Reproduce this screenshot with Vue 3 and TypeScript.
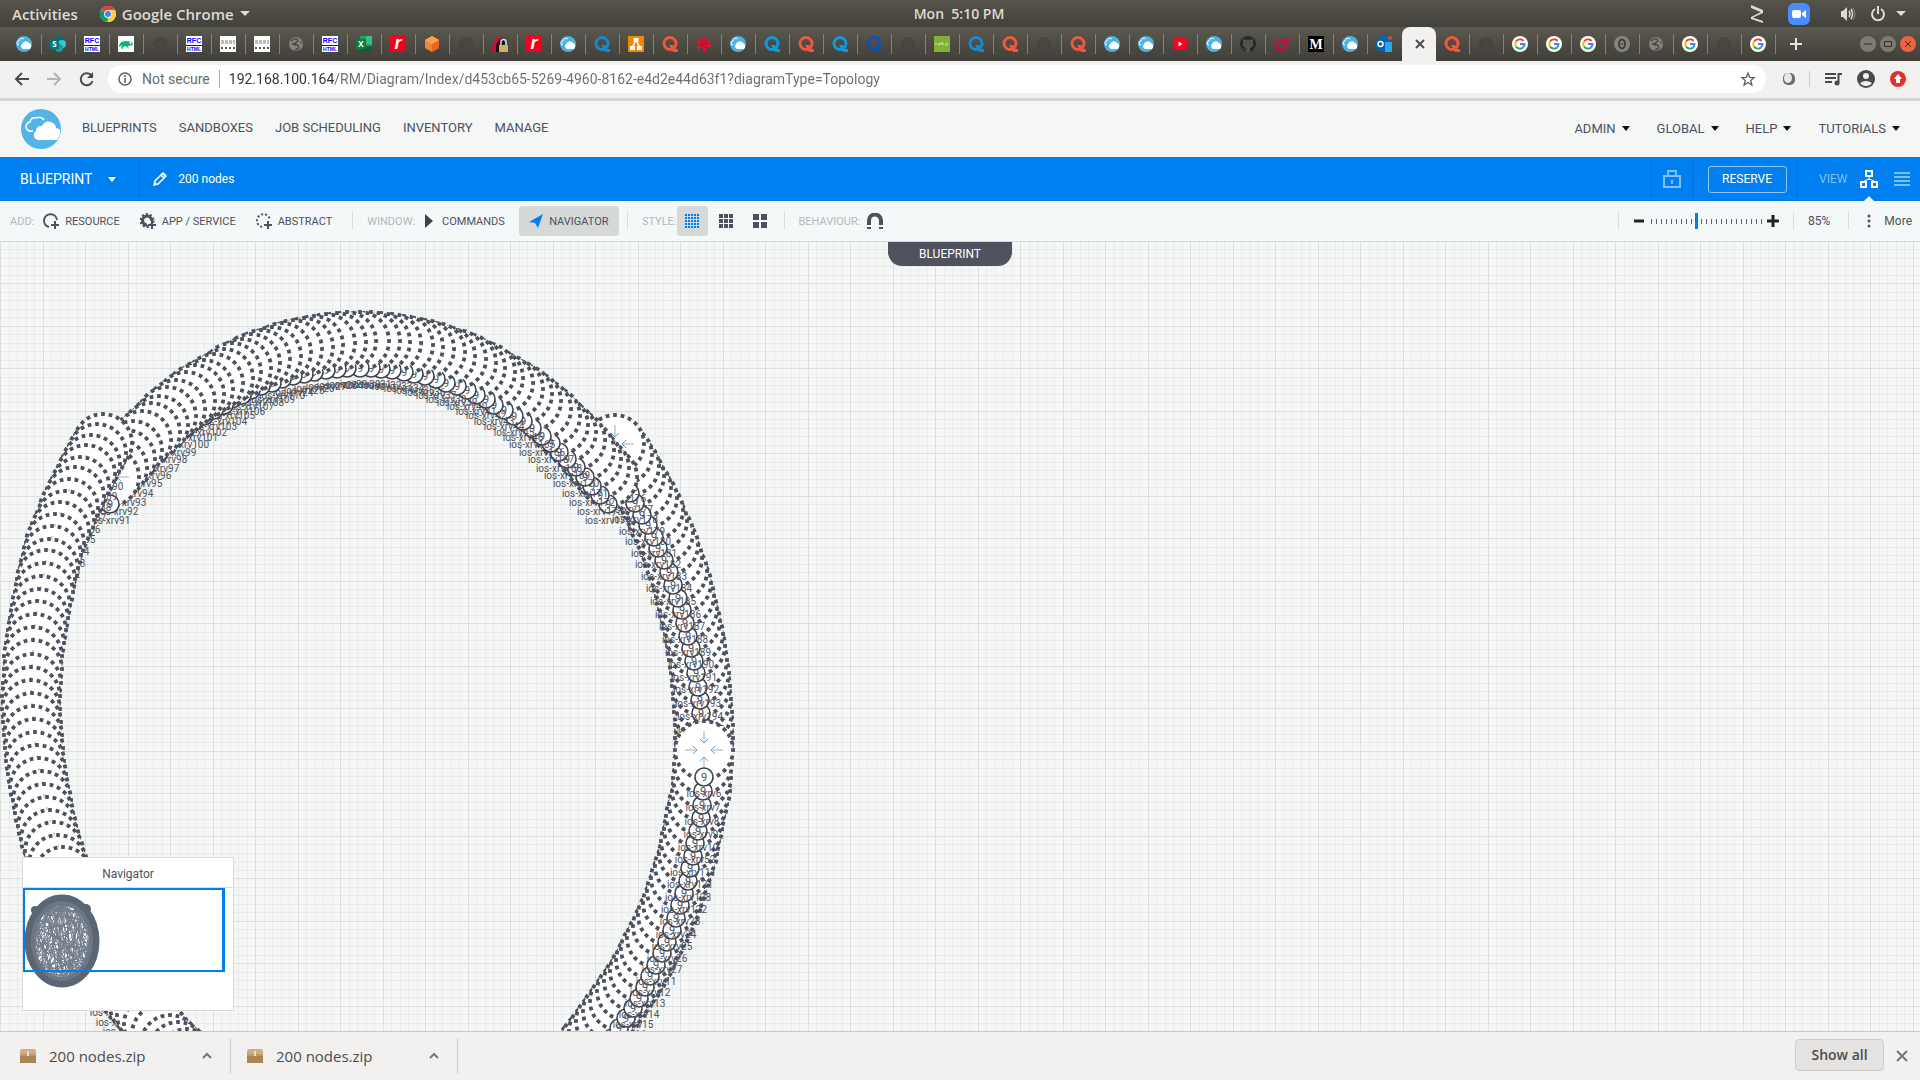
<script setup lang="ts">
import { ref } from 'vue'

interface Tab {
  icon: string
  color?: string
}

interface DiagramNode {
  x: number
  y: number
  label: string
}

const tabs: Tab[] = [
  { icon: 'cloud' }, { icon: 'sharepoint' }, { icon: 'rfc' }, { icon: 'suse' }, { icon: 'globe', color: '#45443f' },
  { icon: 'rfc' }, { icon: 'sketch' }, { icon: 'sketch' }, { icon: 'globe', color: '#85847f' }, { icon: 'rfc' },
  { icon: 'excel' }, { icon: 'r' }, { icon: 'cube' }, { icon: 'globe', color: '#45443f' }, { icon: 'lock' },
  { icon: 'r' }, { icon: 'cloud' }, { icon: 'q', color: '#1b87c9' }, { icon: 'diagram' }, { icon: 'q', color: '#f0583e' },
  { icon: 'flower' }, { icon: 'cloud' }, { icon: 'q', color: '#0f9ad8' }, { icon: 'q', color: '#f0583e' }, { icon: 'q', color: '#0f9ad8' },
  { icon: 'q', color: '#1450a8' }, { icon: 'globe', color: '#45443f' }, { icon: 'juniper' }, { icon: 'q', color: '#1b87c9' }, { icon: 'q', color: '#f0583e' },
  { icon: 'globe', color: '#45443f' }, { icon: 'q', color: '#f0583e' }, { icon: 'cloud' }, { icon: 'cloud' }, { icon: 'youtube' },
  { icon: 'cloud' }, { icon: 'github' }, { icon: 'swirl' }, { icon: 'medium' }, { icon: 'cloud' },
  { icon: 'outlook' }, { icon: 'active' }, { icon: 'q', color: '#f0583e' }, { icon: 'globe', color: '#45443f' }, { icon: 'google' },
  { icon: 'google' }, { icon: 'google' }, { icon: 'ring' }, { icon: 'globe', color: '#85847f' }, { icon: 'google' },
  { icon: 'globe', color: '#45443f' }, { icon: 'google' },
]

const url = ref('192.168.100.164/RM/Diagram/Index/d453cb65-5269-4960-8162-e4d2e44d63f1?diagramType=Topology')
const zoom = ref(85)
const menus = ['BLUEPRINTS', 'SANDBOXES', 'JOB SCHEDULING', 'INVENTORY', 'MANAGE']
const accountMenus = ['ADMIN', 'GLOBAL', 'HELP', 'TUTORIALS']
const downloads = ['200 nodes.zip', '200 nodes.zip']

// Node centres in page space, walked clockwise; the canvas itself starts at CANVAS_TOP.
const CANVAS_TOP = 242

const lowerRight = [
  [704, 750], [703, 764], [702, 778], [701, 791], [698, 804], [695, 816], [693, 829], [690, 841], [688, 854], [684, 866],
  [680, 878], [676, 891], [672, 903], [667, 915], [662, 926], [656, 938], [650, 949], [645, 960], [639, 971], [633, 981],
  [626, 991], [619, 1001], [612, 1011], [605, 1021], [598, 1031], [591, 1040], [584, 1049],
]
const lowerRightIds = [6, 7, 8, 9, 10, 52, 111, 121, 128, 122, 28, 24, 25, 26, 27, 11, 12, 13, 14, 15, 16, 17, 18, 19, 20, 21, 22]

const left = [
  [187, 1058], [178, 1051], [170, 1044], [161, 1034], [153, 1024], [146, 1015], [139, 1006], [131, 997], [123, 988],
  [116, 979], [110, 969], [104, 959], [98, 949], [92, 938], [86, 926], [80, 914], [74, 902], [68, 889], [63, 876],
  [58, 864], [54, 851], [50, 839], [47, 826], [44, 813], [42, 800], [39, 787], [37, 774], [35, 761], [34, 748],
  [33, 735], [32, 722], [31, 709], [31, 696], [32, 683], [33, 669], [33, 656], [35, 643], [37, 630], [39, 618],
  [41, 605], [44, 592], [46, 579], [49, 568], [52, 555], [55, 543], [60, 531], [65, 520], [69, 508], [75, 496],
  [80, 486], [86, 474], [91, 464], [97, 453], [103, 443],
]

const topRight = [
  [360, 341], [371, 341], [381, 342], [392, 343], [404, 345], [414, 347], [425, 349], [436, 352], [446, 356], [457, 359],
  [467, 363], [476, 368], [486, 372], [494, 378], [504, 383], [514, 389], [523, 394], [532, 401], [542, 409], [551, 416],
  [559, 425], [567, 432], [576, 440], [585, 450], [592, 459], [600, 468], [608, 477],
]
const topLeft = topRight.slice(1).reverse().map(([x, y]) => [718 - x, y])
const top = [...topLeft, ...topRight]

const right = [
  [615, 444], [623, 455], [630, 466], [635, 476], [642, 488], [648, 498], [654, 510], [658, 521], [664, 533], [669, 545],
  [673, 558], [678, 571], [682, 583], [685, 596], [688, 609], [691, 621], [694, 634], [696, 646], [698, 660], [700, 673],
  [701, 686], [702, 699], [703, 712], [704, 725], [704, 738],
]

function topLabel(index: number): number {
  const fromEnd = top.length - 1 - index
  if (fromEnd <= 9) return 174 - fromEnd
  if (index < 20) return 91 + index
  return 56 - fromEnd
}

function node(point: number[], id: number): DiagramNode {
  return { x: point[0], y: point[1] - CANVAS_TOP, label: `ios-xrv${id}` }
}

const clockwise: DiagramNode[] = [
  ...lowerRight.map((p, i) => node(p, lowerRightIds[i])),
  ...left.map((p, i) => node(p, 37 + i)),
  ...top.map((p, i) => node(p, topLabel(i))),
  ...right.map((p, i) => node(p, 175 + i)),
]
const nodes = clockwise.reverse()

function gridPath(offset: number, step: number): string {
  let path = ''
  for (let x = 0; x < 3840; x += step) path += `M${Math.round(x)} 0v2160`
  for (let y = offset; y < 2160; y += step) path += `M0 ${Math.round(y)}h3840`
  return path
}
const minorGrid = gridPath(7, 8.5)
const majorGrid = gridPath(41, 42.5)

// Overview links: chords between pseudo-random points of the node ring.
function overviewPath(): string {
  let seed = 7
  const next = () => (seed = (seed * 16807) % 2147483647) / 2147483647
  const point = (angle: number) => `${(39 + 33 * Math.cos(angle)).toFixed(1)} ${(53 + 42 * Math.sin(angle)).toFixed(1)}`
  let path = ''
  for (let i = 0; i < 130; i++) {
    const a = next() * Math.PI * 2
    const b = a + 0.9 + next() * 4.4
    path += `M${point(a)}L${point(b)}`
  }
  return path
}
const links = overviewPath()
</script>

<template>
  <div class="desktop">
    <header class="system">
      <div class="system-left">
        <span>Activities</span>
        <span class="app-name">
          <svg width="16" height="16" viewBox="0 0 16 16">
            <circle cx="8" cy="8" r="8" fill="#e8eaed" />
            <path d="M8 8 1 4A8 8 0 0 1 15 4z" fill="#db4437" />
            <path d="M8 8 1 4a8 8 0 0 0 6.500 12L11 9z" fill="#0f9d58" />
            <path d="M8 8V4h7a8 8 0 0 1-7.500 12z" fill="#ffcd40" />
            <circle cx="8" cy="8" r="4" fill="#f1f1f1" /><circle cx="8" cy="8" r="3" fill="#4285f4" />
          </svg>
          Google Chrome
          <i class="caret light"></i>
        </span>
      </div>
      <span class="clock">Mon&nbsp; 5:10 PM</span>
      <div class="system-right">
        <svg width="14" height="20" viewBox="0 0 14 20" fill="#dfdbd2"><path d="M1 1 13 6v3L1 4zM13 7v2L2 14l-1-1zM1 13l12 4v2L1 15z" /></svg>
        <svg width="22" height="22" viewBox="0 0 22 22"><rect width="22" height="22" rx="6" fill="#4a8cff" /><rect x="4" y="7" width="9" height="8" rx="2" fill="#fff" /><path d="m14 10 4-3v8l-4-3z" fill="#fff" /></svg>
        <svg class="volume" width="16" height="16" viewBox="0 0 16 16" fill="none" stroke="#dfdbd2"><path d="M1 5h2l4-4v14l-4-4H1z" fill="#dfdbd2" stroke="none" /><path d="M9 5q2 3 0 6M11 3q3 5 0 10" stroke-width="1.500" /><path d="M13 2q4 6 0 12" stroke="#8b8982" /></svg>
        <svg width="16" height="16" viewBox="0 0 16 16" fill="none" stroke="#dfdbd2" stroke-width="2"><path d="M5 3a6 6 0 1 0 6 0M8 0v8" /></svg>
        <i class="caret light"></i>
      </div>
    </header>

    <nav class="tabs">
      <div v-for="(tab, i) in tabs" :key="i" class="tab" :class="{ active: tab.icon === 'active', before: tabs[i + 1]?.icon === 'active' }">
        <svg width="16" height="16" viewBox="0 0 16 16">
          <template v-if="tab.icon === 'cloud'">
            <circle cx="8" cy="8" r="8" fill="#4fb2e3" />
            <path d="M3 9a2 2 0 0 1 0-4 3 3 0 0 1 5-2" fill="none" stroke="#fff" />
            <path d="M7 13a3 3 0 0 1-1-5 4 4 0 0 1 7-1 3 3 0 0 1 2 3 3 3 0 0 1-1 3z" fill="#fff" />
          </template>
          <template v-else-if="tab.icon === 'q'">
            <circle cx="8" cy="7.500" r="6" fill="none" :stroke="tab.color" stroke-width="3" />
            <path d="M7 9l4 0 2 4h3v3h-5z" :fill="tab.color" />
          </template>
          <template v-else-if="tab.icon === 'globe'">
            <circle cx="8" cy="8" r="7" :fill="tab.color" />
            <path d="M3 5q4-4 7-1L8 7 5 8l2 1 3 0 1 3-4 2M12 6l2 1" fill="none" stroke="#4b4a44" stroke-width="1.500" />
          </template>
          <template v-else-if="tab.icon === 'google'">
            <circle cx="8" cy="8" r="8" fill="#fff" />
            <g fill="none" stroke-width="2"><path d="M4 5.500A4.700 4.700 0 0 1 11.500 5" stroke="#ea4335" /><path d="M4 5.500a4.700 4.700 0 0 0 0 5" stroke="#fbbc05" /><path d="M4 10.500a4.700 4.700 0 0 0 7 1" stroke="#34a853" /><path d="M11 11.500a4.700 4.700 0 0 0 1.500-3.500H8" stroke="#4285f4" /></g>
          </template>
          <template v-else-if="tab.icon === 'rfc'">
            <rect width="16" height="16" fill="#fff" /><rect y="9" width="16" height="1" fill="#10f" />
            <text x="8" y="7" class="rfc">RFC</text><text x="8" y="15" class="rfc small">HTML</text>
          </template>
          <template v-else-if="tab.icon === 'sharepoint'">
            <circle cx="9" cy="5" r="5" fill="#036c70" /><circle cx="12" cy="8" r="4" fill="#37c6d0" /><circle cx="9" cy="12" r="4" fill="#1a9ba1" />
            <rect y="4" width="9" height="9" rx="1" fill="#03787c" /><text x="4.500" y="11" class="glyph">S</text>
          </template>
          <template v-else-if="tab.icon === 'suse'">
            <rect width="16" height="16" fill="#fff" /><path d="M1 11q0-6 7-6l6 1 1 3-5 1 1 3-3-3-3 1v2q-3 0-1-4-1 0-2 2z" fill="#0ab27a" /><circle cx="12.500" cy="7" r="1" fill="#fff" />
          </template>
          <template v-else-if="tab.icon === 'sketch'">
            <rect width="16" height="16" fill="#fff" /><path d="M1 5h14M1 7h14" stroke="#aaa69d" stroke-width="1.500" stroke-dasharray="3 1" /><path d="M1 12h14" stroke="#555" stroke-width="2" stroke-dasharray="2 2" />
          </template>
          <template v-else-if="tab.icon === 'excel'">
            <rect x="4" width="12" height="16" fill="#21a366" /><rect x="10" width="6" height="8" fill="#33c481" /><rect x="4" y="10" width="12" height="6" fill="#185c37" />
            <rect y="3" width="10" height="10" rx="1" fill="#107c41" /><text x="5" y="11" class="glyph">X</text>
          </template>
          <template v-else-if="tab.icon === 'r'">
            <rect width="16" height="16" fill="#f5001c" /><text x="8" y="13" class="letter-r">r</text>
          </template>
          <template v-else-if="tab.icon === 'cube'">
            <path d="M8 0l7 4v8l-7 4-7-4V4z" fill="#f58536" /><path d="M8 8l7-4v8l-7 4z" fill="#e8651f" /><path d="M8 0l7 4-7 4-7-4z" fill="#ffa04f" />
          </template>
          <template v-else-if="tab.icon === 'lock'">
            <path d="M0 14Q1 1 10 0l-3 16H0z" fill="#c8102e" /><path d="M4 16Q3 4 11 2l2 5-3 9z" fill="#111" /><path d="M9 9V6a2 2 0 0 1 5 0v3" fill="none" stroke="#ddd" stroke-width="1.500" /><rect x="7" y="9" width="9" height="7" fill="#cfae6a" />
          </template>
          <template v-else-if="tab.icon === 'diagram'">
            <rect width="16" height="16" rx="1" fill="#f08705" /><path d="M8 4 4 12M8 4l4 8" stroke="#fff" stroke-width="1.500" /><rect x="5.500" y="2" width="5" height="4" fill="#fff" /><rect x="2" y="10" width="5" height="4" fill="#fff" /><rect x="9" y="10" width="5" height="4" fill="#fff" />
          </template>
          <template v-else-if="tab.icon === 'flower'">
            <path d="M8 8 7 0l3 1zM8 8l6-5 1 3zM8 8l8 1-2 3zM8 8l3 7-4 1zM8 8l-5 6-2-3zM8 8 0 7l2-3zM8 8 3 2l3-1z" fill="#e8112f" /><circle cx="8" cy="8" r="4" fill="#d00d2b" />
          </template>
          <template v-else-if="tab.icon === 'juniper'">
            <rect width="16" height="16" fill="#84b135" /><path d="M2 9V7M4 9h1V7M7 9V7h2v2M11 9h2V7" fill="none" stroke="#dbe9bd" />
          </template>
          <template v-else-if="tab.icon === 'youtube'">
            <rect x="1" y="2" width="14" height="12" rx="3" fill="#ff0020" /><path d="m6.500 5.500 4 2.500-4 2.500z" fill="#fff" />
          </template>
          <template v-else-if="tab.icon === 'github'">
            <circle cx="8" cy="8" r="8" fill="#24292e" /><path d="M6 16v-4q-4-1-3-5V3l3 1h4l3-1v4q1 4-3 5v4z" fill="#55534c" /><path d="M6 14q-2 0-3-2" fill="none" stroke="#55534c" />
          </template>
          <template v-else-if="tab.icon === 'swirl'">
            <circle cx="7" cy="9" r="5" fill="none" stroke="#ce0b3c" stroke-width="2.500" /><circle cx="14" cy="4" r="2" fill="#ce0b3c" />
          </template>
          <template v-else-if="tab.icon === 'medium'">
            <rect width="16" height="16" fill="#000" /><text x="8" y="13" class="medium">M</text>
          </template>
          <template v-else-if="tab.icon === 'outlook'">
            <rect x="3" width="11" height="15" rx="1" fill="#0a63b8" /><rect x="9" y="6" width="7" height="10" fill="#28a8ea" /><rect y="3" width="9" height="10" rx="1" fill="#0a5cad" /><circle cx="4.500" cy="8" r="2.500" fill="none" stroke="#fff" stroke-width="1.500" /><circle cx="14" cy="2" r="2" fill="#e8413a" />
          </template>
          <template v-else-if="tab.icon === 'ring'">
            <circle cx="8" cy="8" r="8" fill="#85847f" /><ellipse cx="8" cy="8" rx="3" ry="4.500" fill="none" stroke="#403f3a" stroke-width="2" /><circle cx="8" cy="8" r="1" fill="#403f3a" />
          </template>
          <path v-else d="m4 4 8 8m0-8-8 8" stroke="#4c4c4c" stroke-width="2" />
        </svg>
      </div>
      <button class="new-tab" aria-label="New tab"><svg width="14" height="14" viewBox="0 0 14 14"><path d="M7 1v12M1 7h12" stroke="#e8e6e1" stroke-width="2" /></svg></button>
      <div class="window-buttons">
        <button aria-label="Minimize"><svg width="16" height="16" viewBox="0 0 16 16"><path d="M4 8h8" stroke="#2f2e2a" /></svg></button>
        <button aria-label="Maximize"><svg width="16" height="16" viewBox="0 0 16 16"><path d="M4.500 5.500h7v5h-7z" fill="none" stroke="#2f2e2a" /></svg></button>
        <button class="close" aria-label="Close"><svg width="16" height="16" viewBox="0 0 16 16"><path d="m5 5 6 6m0-6-6 6" stroke="#4a2015" /></svg></button>
      </div>
    </nav>

    <div class="browser-bar">
      <button aria-label="Back"><svg width="16" height="16" viewBox="0 0 16 16" fill="none" stroke="#4a4a4a" stroke-width="2"><path d="M15 8H2M8 2 2 8l6 6" /></svg></button>
      <button aria-label="Forward"><svg width="16" height="16" viewBox="0 0 16 16" fill="none" stroke="#b5b4b3" stroke-width="2"><path d="M1 8h13M8 2l6 6-6 6" /></svg></button>
      <button aria-label="Reload"><svg width="16" height="16" viewBox="0 0 16 16"><path d="M13 4a6 6 0 1 0 1.500 6" fill="none" stroke="#4a4a4a" stroke-width="2" /><path d="M15 1v6H9z" fill="#4a4a4a" /></svg></button>
      <div class="address">
        <svg width="14" height="14" viewBox="0 0 14 14" fill="none" stroke="#5f5f5f"><circle cx="7" cy="7" r="6" stroke-width="1.500" /><path d="M7 6v5M7 3v2" stroke-width="1.500" /></svg>
        <label for="url">Not secure</label>
        <input id="url" v-model="url" type="text" spellcheck="false" />
        <svg width="16" height="16" viewBox="0 0 16 16"><path d="m8 2 1.700 4.300 4.500.3-3.500 2.900 1.200 4.500L8 11.500 4.100 14l1.200-4.500L1.800 6.600l4.500-.3z" fill="none" stroke="#5f5f5f" stroke-width="1.300" /></svg>
      </div>
      <div class="extensions">
        <svg width="14" height="14" viewBox="0 0 14 14"><rect x="1" y="1" width="12" height="12" rx="5" fill="#6d6d6d" /><ellipse cx="6" cy="6" rx="4" ry="5" fill="#e8e8e8" /></svg>
        <i class="bar-divider"></i>
        <svg width="17" height="14" viewBox="0 0 17 14"><path d="M0 2h11M0 6h11M0 10h7" stroke="#4a4a4a" stroke-width="2" /><path d="M13.500 11V2H17" fill="none" stroke="#4a4a4a" stroke-width="2" /><circle cx="12" cy="11" r="2.500" fill="#4a4a4a" /></svg>
        <svg width="18" height="18" viewBox="0 0 18 18"><circle cx="9" cy="9" r="9" fill="#4a4a4a" /><circle cx="9" cy="6" r="3" fill="#f2f1f0" /><path d="M3 13q6-4 12 0-2 3-6 3t-6-3z" fill="#f2f1f0" /></svg>
        <svg width="16" height="16" viewBox="0 0 16 16"><circle cx="8" cy="8" r="8" fill="#e0312d" /><path d="m8 3 4 5H10v4H6V8H4z" fill="#fff" /></svg>
      </div>
    </div>

    <header class="app-header">
      <svg class="logo" width="40" height="40" viewBox="0 0 40 40">
        <circle cx="20" cy="20" r="20" fill="#55b4e5" />
        <path d="M12 22q-6 1-7-4 0-4 4-5 1-5 6-4 5-2 8 2" fill="none" stroke="#fff" stroke-width="1.500" />
        <path d="M17 31a5 5 0 0 1-2-9q0-5 6-5 3-6 9-4 5 2 5 6 4 1 4.500 3-.5 5-3.500 9z" fill="#fff" />
      </svg>
      <nav class="menus"><a v-for="m in menus" :key="m" href="#">{{ m }}</a></nav>
      <nav class="account"><a v-for="m in accountMenus" :key="m" href="#">{{ m }}<i class="caret dark"></i></a></nav>
    </header>

    <section class="title-bar">
      <button class="kind">BLUEPRINT<i class="caret white"></i></button>
      <div class="title">
        <svg width="14" height="14" viewBox="0 0 14 14"><path d="m1 13 1-4 8-8 3 3-8 8zM8 3l3 3" fill="none" stroke="#fff" stroke-width="1.500" /><path d="m1 13 1-3 2 2zM9 2l2-1 2 2-1 2z" fill="#fff" /></svg>
        <span>200 nodes</span>
      </div>
      <div class="cell lock"><svg width="18" height="18" viewBox="0 0 18 18" fill="none" stroke="#7fc0f8" stroke-width="2"><path d="M1 6h16v11H1zM5 6V1h8v5" /><path d="M9 10v4" stroke-width="2" /></svg></div>
      <div class="cell reserve-cell"><button class="reserve">RESERVE</button></div>
      <div class="cell views">
        <span>VIEW</span>
        <button class="view current" aria-label="Diagram view"><svg width="18" height="18" viewBox="0 0 18 18" fill="none" stroke="#fff" stroke-width="2"><path d="M6 1h6v5H6zM1 12h5v5H1zM12 12h5v5h-5z" /><path d="M9 6v4M4 11l5-2 5 2" stroke-width="1" /></svg></button>
        <button class="view" aria-label="List view"><svg width="16" height="14" viewBox="0 0 16 14"><path d="M0 1h16M0 5h16M0 9h16M0 13h16" stroke="#7fc0f8" stroke-width="2" /></svg></button>
      </div>
    </section>

    <section class="toolbar">
      <span class="group-name">ADD:</span>
      <button class="tool first"><svg width="16" height="16" viewBox="0 0 16 16" fill="none" stroke="#4d505d" stroke-width="2"><path d="M6 14A6.500 6.500 0 1 1 14 7M12 8v8M8 12h8" /></svg>RESOURCE</button>
      <button class="tool"><svg width="16" height="16" viewBox="0 0 16 16" fill="none" stroke="#4d505d"><circle cx="7" cy="7.500" r="6" stroke-width="3" stroke-dasharray="2 1.770" /><path d="M7 12a4.500 4.500 0 1 1 4.500-4" stroke-width="3" /><path d="M12 8v8M8 12h8" stroke-width="2" /></svg>APP / SERVICE</button>
      <button class="tool"><svg width="16" height="16" viewBox="0 0 16 16" fill="none" stroke="#4d505d" stroke-width="2"><path d="M6 14A6.500 6.500 0 1 1 14 7" stroke-dasharray="2 2" /><path d="M12 8v8M8 12h8" /></svg>ABSTRACT</button>
      <i class="tool-divider"></i>
      <span class="group-name">WINDOW:</span>
      <button class="tool commands"><svg width="8" height="14" viewBox="0 0 8 14"><path d="M0 0l8 7-8 7z" fill="#3f424e" /></svg>COMMANDS</button>
      <button class="tool pressed"><svg width="14" height="14" viewBox="0 0 14 14"><path d="M14 0 9 14 6 9 0 8z" fill="#0080f0" /></svg>NAVIGATOR</button>
      <i class="tool-divider tight"></i>
      <span class="group-name">STYLE:</span>
      <div class="styles">
        <button class="style pressed" aria-label="Small nodes"><svg width="15" height="14" viewBox="0 0 15 14"><path d="M0 1h15M0 4h15M0 7h15M0 10h15M0 13h15" stroke="#0080f0" stroke-width="2" stroke-dasharray="2 1" /></svg></button>
        <button class="style" aria-label="Medium nodes"><svg width="14" height="14" viewBox="0 0 14 14"><path d="M0 2h14M0 7h14M0 12h14" stroke="#4d505d" stroke-width="4" stroke-dasharray="4 1" /></svg></button>
        <button class="style" aria-label="Large nodes"><svg width="14" height="14" viewBox="0 0 14 14"><path d="M0 3h14M0 11h14" stroke="#4d505d" stroke-width="6" stroke-dasharray="6 2" /></svg></button>
      </div>
      <i class="tool-divider tight"></i>
      <span class="group-name">BEHAVIOUR:</span>
      <button class="magnet" aria-label="Snap"><svg width="16" height="16" viewBox="0 0 16 16"><path d="M2 12V7.500a6 6 0 0 1 12 0V12" fill="none" stroke="#4d505d" stroke-width="4" /><path d="M0 15h4M12 15h4" stroke="#4d505d" stroke-width="2" /></svg></button>
      <div class="zoom">
        <i class="tool-divider"></i>
        <button aria-label="Zoom out"><svg width="12" height="12" viewBox="0 0 12 12"><path d="M1 6h10" stroke="#222" stroke-width="3" /></svg></button>
        <input v-model.number="zoom" type="range" min="45" max="145" aria-label="Zoom" />
        <button aria-label="Zoom in"><svg width="12" height="12" viewBox="0 0 12 12"><path d="M0 6h12M6 0v12" stroke="#222" stroke-width="3" /></svg></button>
        <i class="tool-divider"></i>
        <span class="percent">{{ zoom }}%</span>
        <i class="tool-divider"></i>
        <button class="more"><svg width="4" height="14" viewBox="0 0 4 14" fill="#4d505d"><circle cx="2" cy="2" r="1.500" /><circle cx="2" cy="7" r="1.500" /><circle cx="2" cy="12" r="1.500" /></svg>More</button>
      </div>
    </section>

    <main class="canvas">
      <svg class="diagram" width="100%" height="100%">
        <path :d="minorGrid" class="grid minor" />
        <path :d="majorGrid" class="grid major" />
        <g v-for="(n, i) in nodes" :key="i" :transform="`translate(${n.x} ${n.y})`">
          <circle r="29" class="body" pathLength="240" />
          <path d="M0-19V-7M0 19V7M-19 0H-7M19 0H7" class="stem" />
          <path d="M-4-11 0-7l4-4M-4 11 0 7l4 4M-11-4l4 4-4 4M11-4 7 0l4 4" class="tip" />
          <circle cy="27" r="9" class="badge" />
          <text y="31" class="count">9</text>
          <text y="47" class="name">{{ n.label }}</text>
        </g>
      </svg>
      <h1 class="canvas-tab">BLUEPRINT</h1>
      <aside class="navigator">
        <h2>Navigator</h2>
        <div class="overview">
          <svg width="208" height="120" viewBox="0 0 208 120">
            <path :d="links" class="link" />
            <circle cx="12" cy="22" r="4" fill="#5a6673" /><circle cx="63" cy="21" r="5" fill="#5a6673" />
            <ellipse cx="39" cy="53" rx="34" ry="43" class="ring" />
            <ellipse cx="39" cy="53" rx="29" ry="38" class="halo" />
          </svg>
          <div class="viewport"></div>
        </div>
      </aside>
    </main>

    <footer class="downloads">
      <div v-for="(file, i) in downloads" :key="i" class="download">
        <svg width="16" height="14" viewBox="0 0 16 14"><path d="M1 0h14l1 5v9H0V5z" fill="#a98555" /><path d="M1 0h14l1 5H0z" fill="#cdae85" /><path d="M0 5h16v2H0z" fill="#bd9a6a" /><path d="M8 2v5" stroke="#efe0c8" stroke-width="2" /></svg>
        <span>{{ file }}</span>
        <button aria-label="Options"><svg width="10" height="8" viewBox="0 0 10 8"><path d="m1 6 4-4 4 4" fill="none" stroke="#777" stroke-width="2" /></svg></button>
      </div>
      <button class="show-all">Show all</button>
      <button class="dismiss" aria-label="Close"><svg width="12" height="12" viewBox="0 0 12 12"><path d="m1 1 10 10m0-10L1 11" stroke="#777" stroke-width="2" /></svg></button>
    </footer>
  </div>
</template>

<style>
body {
  margin: 0;
}
</style>

<style scoped>
* {
  box-sizing: border-box;
}
svg {
  display: block;
  flex: none;
}
button {
  border: 0;
  padding: 0;
  background: none;
  font: inherit;
  color: inherit;
  display: flex;
  align-items: center;
  justify-content: center;
}
a {
  color: inherit;
  text-decoration: none;
}
.desktop {
  height: 100vh;
  display: flex;
  flex-direction: column;
  overflow: hidden;
  font-family: Roboto, "Liberation Sans", sans-serif;
  color: #4d505d;
}
.caret {
  flex: none;
  width: 0;
  height: 0;
  border: 4px solid transparent;
  border-top: 5px solid currentColor;
  border-bottom: 0;
}
.caret.light {
  border-left-width: 5px;
  border-right-width: 5px;
}
.caret.dark {
  color: #111;
}

.system {
  flex: none;
  height: 27px;
  display: grid;
  grid-template-columns: 1fr auto 1fr;
  align-items: center;
  padding: 0 14px 0 12px;
  background: linear-gradient(#55534b, #42413b);
  color: #dfdbd2;
  font: 600 15px "Open Sans", sans-serif;
}
.system-left,
.app-name,
.system-right {
  display: flex;
  align-items: center;
}
.system-left {
  gap: 22px;
}
.app-name {
  gap: 6px;
}
.clock {
  font-size: 14px;
  white-space: nowrap;
}
.system-right {
  justify-content: flex-end;
  gap: 14px;
}
.system-right .volume {
  margin-left: 16px;
}
.system-right svg:first-child {
  margin-right: 10px;
}
.system-right .caret {
  margin-left: -4px;
}

.tabs {
  flex: none;
  height: 34px;
  display: flex;
  align-items: center;
  padding: 0 4px 0 8px;
  background: linear-gradient(#5b594f, #3f3e38);
}
.tab {
  flex: none;
  width: 34px;
  height: 20px;
  display: flex;
  align-items: center;
  padding-left: 8px;
  border-right: 1px solid #85837b;
}
.tab.before {
  border-color: transparent;
}
.tab.active {
  height: 34px;
  padding-left: 10px;
  border: 0;
  border-radius: 8px 8px 0 0;
  background: #f2f1f0;
}
.rfc {
  font: bold 7px "Liberation Sans", sans-serif;
  fill: #10f;
  text-anchor: middle;
}
.rfc.small {
  font-size: 5px;
}
.glyph {
  font: bold 8px "Open Sans", sans-serif;
  fill: #fff;
  text-anchor: middle;
}
.letter-r {
  font: italic bold 18px "Liberation Sans", sans-serif;
  fill: #fff;
  text-anchor: middle;
}
.medium {
  font: bold 14px "Liberation Serif", serif;
  fill: #fff;
  text-anchor: middle;
}
.new-tab {
  margin-left: 13px;
}
.window-buttons {
  margin-left: auto;
  display: flex;
  gap: 4px;
}
.window-buttons button {
  width: 16px;
  height: 16px;
  border-radius: 8px;
  background: #7c7a72;
}
.window-buttons .close {
  background: #ee6240;
}

.browser-bar {
  flex: none;
  height: 40px;
  padding: 0 14px 1px;
  display: flex;
  align-items: center;
  gap: 16px;
  background: #f2f1f0;
  border-bottom: 3px solid #d6d6d6;
}
.address {
  flex: 1;
  height: 28px;
  margin-left: -2px;
  padding: 0 10px;
  display: flex;
  align-items: center;
  border-radius: 14px;
  background: #fff;
  color: #6c6c6c;
  font: 14px Roboto, sans-serif;
}
.address label {
  margin-left: 10px;
  padding-right: 9px;
  line-height: 18px;
  border-right: 1px solid #aaa;
  white-space: nowrap;
}
.address input {
  flex: 1;
  min-width: 0;
  height: 24px;
  margin-left: 9px;
  padding: 0;
  border: 0;
  outline: 0;
  font: inherit;
  color: transparent;
  background: linear-gradient(90deg, #303030 106px, #6c6c6c 106px);
  background-clip: text;
}
.extensions {
  display: flex;
  align-items: center;
  gap: 15px;
}
.bar-divider {
  width: 1px;
  height: 16px;
  margin-left: -2px;
  background: #ccc;
}

.app-header {
  flex: none;
  height: 56px;
  padding: 0 20px 0 21px;
  display: flex;
  align-items: center;
  background: #f4f7f6;
  font-size: 13px;
}
.menus {
  margin-left: 21px;
  padding-bottom: 4px;
  display: flex;
  gap: 22px;
}
.account {
  margin-left: auto;
  padding-bottom: 2px;
  display: flex;
  gap: 27px;
}
.account a {
  display: flex;
  align-items: center;
  gap: 6px;
}

.title-bar {
  flex: none;
  height: 44px;
  display: flex;
  align-items: stretch;
  background: #0080f0;
  color: #fff;
  font-size: 12px;
}
.kind {
  padding: 0 23px 0 20px;
  gap: 16px;
  font-size: 14px;
  border-right: 1px solid #0071d8;
}
.title {
  flex: 1;
  display: flex;
  align-items: center;
  gap: 11px;
  padding-left: 13px;
}
.cell {
  display: flex;
  align-items: center;
  justify-content: center;
  border-left: 1px solid #0071d8;
}
.lock {
  width: 41px;
}
.reserve-cell {
  width: 105px;
  padding-left: 4px;
}
.reserve {
  width: 79px;
  height: 27px;
  border: 1px solid #8cc6fa;
  border-radius: 3px;
}
.views {
  width: 123px;
  justify-content: flex-start;
  padding-left: 21px;
  color: #7fc0f8;
}
.view {
  position: relative;
  align-self: stretch;
  margin-left: 13px;
}
.view + .view {
  margin-left: 16px;
}
.view.current::after {
  content: "";
  position: absolute;
  bottom: 0;
  left: 4px;
  border: 5px solid transparent;
  border-bottom-color: #f5f8f9;
  border-top: 0;
}

.toolbar {
  flex: none;
  height: 41px;
  padding: 0 8px 0 10px;
  display: flex;
  align-items: center;
  background: #f5f8f9;
  border-bottom: 1px solid #d8dbdb;
  font-size: 11px;
}
.group-name {
  color: #b4b8bb;
  white-space: nowrap;
}
.tool {
  height: 30px;
  gap: 6px;
  margin-left: 20px;
  white-space: nowrap;
}
.tool.first {
  margin-left: 9px;
}
.tool.commands {
  margin-left: 10px;
  gap: 9px;
}
.tool.pressed {
  width: 100px;
  margin-left: 14px;
}
.pressed {
  background: #d7d9d9;
  border-radius: 3px;
}
.tool-divider {
  flex: none;
  width: 1px;
  height: 18px;
  margin: 0 14px 0 20px;
  background: #dadddd;
}
.tool-divider.tight {
  margin-left: 8px;
}
.styles {
  display: flex;
  gap: 3px;
}
.style {
  width: 31px;
  height: 30px;
}
.magnet {
  margin-left: 7px;
}
.zoom {
  margin-left: auto;
  display: flex;
  align-items: center;
}
.zoom .tool-divider {
  margin: 0 14px;
}
.zoom input {
  appearance: none;
  width: 112px;
  height: 14px;
  margin: 0 4px 0 6px;
  background: repeating-linear-gradient(90deg, #6a5a6c 0 1px, transparent 1px 5px) 0 5px / 100% 5px no-repeat;
}
.zoom input::-webkit-slider-thumb {
  appearance: none;
  width: 3px;
  height: 16px;
  background: #0080f0;
}
.percent,
.more {
  font-size: 12px;
}
.percent {
  margin-right: 4px;
}
.more {
  gap: 13px;
  margin-left: 4px;
}

.canvas {
  position: relative;
  flex: 1;
  min-height: 0;
  overflow: hidden;
  background: #f4f7f6;
}
.diagram {
  position: absolute;
  inset: 0;
}
.grid {
  fill: none;
  stroke-width: 1px;
  shape-rendering: crispEdges;
}
.minor {
  stroke: #e9eceb;
}
.major {
  stroke: #dcdfde;
}
.body {
  fill: #fff;
  stroke: #4d505d;
  stroke-width: 3.8;
  stroke-dasharray: 5 5;
  stroke-dashoffset: 2.5;
}
.stem {
  stroke: #a9a9a9;
}
.tip {
  fill: none;
  stroke: #4fa3ea;
}
.badge {
  fill: #fff;
  stroke: #3f424e;
  stroke-width: 1.5;
}
.count,
.name {
  font-size: 11px;
  text-anchor: middle;
  fill: #4d505d;
}
.name {
  font-size: 10px;
}
.canvas-tab {
  position: absolute;
  top: 0;
  left: 888px;
  width: 124px;
  height: 24px;
  margin: 0;
  border-radius: 0 0 14px 14px;
  background: #50525f;
  color: #fff;
  font-size: 12px;
  font-weight: 400;
  line-height: 24px;
  text-align: center;
}
.navigator {
  position: absolute;
  left: 22px;
  bottom: 20px;
  width: 212px;
  height: 154px;
  border: 1px solid #dcdcdc;
  background: #fff;
}
.navigator h2 {
  height: 30px;
  margin: 0;
  border-bottom: 1px solid #ddd;
  font-size: 12px;
  font-weight: 400;
  line-height: 32px;
  text-align: center;
}
.overview {
  position: relative;
}
.link {
  fill: none;
  stroke: #747d8c;
  stroke-width: 1px;
}
.ring {
  fill: none;
  stroke: #5a6673;
  stroke-width: 7px;
}
.halo {
  fill: none;
  stroke: #6d7685;
  stroke-width: 4px;
}
.viewport {
  position: absolute;
  left: 0;
  top: 0;
  width: 202px;
  height: 84px;
  border: 2px solid #0080f0;
  border-right-width: 3px;
}

.downloads {
  flex: none;
  height: 49px;
  padding-right: 12px;
  display: flex;
  align-items: center;
  background: #f2f1f0;
  border-top: 1px solid #cacaca;
  color: #4c4c4c;
  font: 15px "Open Sans", sans-serif;
}
.download {
  width: 227px;
  height: 36px;
  padding: 0 18px 0 16px;
  display: flex;
  align-items: center;
  gap: 13px;
  border-right: 1px solid #ccc;
}
.download:first-child {
  width: 231px;
  padding-left: 20px;
}
.download button {
  margin-left: auto;
}
.show-all {
  width: 89px;
  height: 32px;
  margin-left: auto;
  margin-bottom: 3px;
  border: 1px solid #cfcdcb;
  border-radius: 4px;
  background: #e4e3e1;
  font-size: 14px;
  font-weight: 600;
}
.dismiss {
  margin-left: 12px;
}
</style>
